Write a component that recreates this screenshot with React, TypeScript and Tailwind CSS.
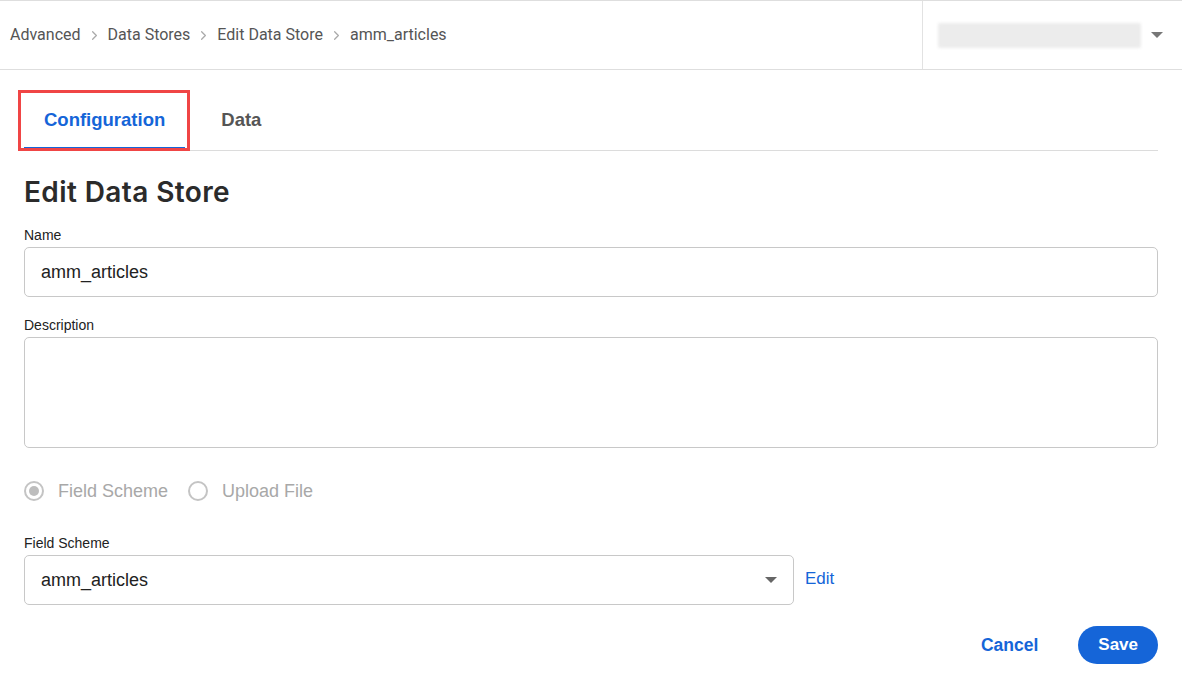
import { ChevronRight } from 'lucide-react';

const crumbs = ['Advanced', 'Data Stores', 'Edit Data Store', 'amm_articles'];

function Caret({ className }: { className?: string }) {
  return (
    <svg width="12" height="6" viewBox="0 0 12 6" className={className}>
      <path d="M0 0 L12 0 L6 6 Z" fill="currentColor" />
    </svg>
  );
}

function Radio({ checked, label }: { checked?: boolean; label: string }) {
  return (
    <label className="flex items-center gap-[14px] text-[18px] text-[#a8a8a8]">
      <span className="flex h-[20px] w-[20px] items-center justify-center rounded-full border-2 border-[#c4c4c4]">
        {checked && <span className="h-[10px] w-[10px] rounded-full bg-[#bdbdbd]" />}
      </span>
      {label}
    </label>
  );
}

export default function App() {
  return (
    <div className="h-[684px] w-full bg-white font-['Liberation_Sans',Arial,sans-serif] text-[#222]">
      <header className="flex h-[70px] border-y border-[#dedede]">
        <nav className="flex flex-1 items-center pl-[10px] font-['Roboto',sans-serif] text-[16px] text-[#555]">
          {crumbs.map((c, i) => (
            <span key={c} className="flex items-center">
              {i > 0 && <ChevronRight size={15} strokeWidth={2} className="mx-[6px] text-[#aaa]" />}
              {c}
            </span>
          ))}
        </nav>
        <div className="flex w-[260px] items-center border-l border-[#e2e2e2] pl-[15px]">
          <div className="h-[25px] w-[203px] rounded-[2px] bg-[#ececec] blur-[1.5px]" />
          <Caret className="ml-[10px] text-[#777]" />
        </div>
      </header>

      <main className="px-6 pt-[20px]">
        <div className="flex gap-4 border-b border-[#dcdcdc]">
          <div className="relative flex h-[60px] items-center border-b-[3px] border-[#1565d8] px-5 pt-[3px] text-[18.5px] font-bold text-[#1565d8]">
            Configuration
            <span className="pointer-events-none absolute top-0 -bottom-[4px] -left-[6px] -right-[5px] border-[3px] border-[#f04545]" />
          </div>
          <div className="flex h-[60px] items-center px-5 text-[18.5px] font-bold text-[#555]">Data</div>
        </div>

        <h1 className="mt-[23px] font-['Inter',sans-serif] text-[28px] font-semibold leading-[36px] tracking-[0.4px] text-[#2b2b2b]">
          Edit Data Store
        </h1>

        <div className="mt-[15px] text-[14px] leading-[20px]">Name</div>
        <div className="mt-[2px] flex h-[50px] items-center rounded-[5px] border border-[#c8c8c8] px-4 text-[18px]">
          amm_articles
        </div>

        <div className="mt-[18px] text-[14px] leading-[20px]">Description</div>
        <div className="mt-[2px] h-[111px] rounded-[5px] border border-[#c8c8c8]" />

        <div className="mt-[31px] flex h-[24px] items-center gap-[20px]">
          <Radio checked label="Field Scheme" />
          <Radio label="Upload File" />
        </div>

        <div className="mt-[30px] text-[14px] leading-[20px]">Field Scheme</div>
        <div className="mt-[2px] flex items-center gap-[11px]">
          <div className="flex h-[50px] w-[770px] items-center justify-between rounded-[5px] border border-[#c8c8c8] pl-4 pr-[16px] text-[18px]">
            amm_articles
            <Caret className="text-[#666]" />
          </div>
          <a className="mb-[3px] text-[17px] text-[#1565d8]">Edit</a>
        </div>

        <div className="mt-[21px] flex items-center justify-end gap-10">
          <button className="text-[17.5px] font-bold text-[#1565d8]">Cancel</button>
          <button className="h-[38px] rounded-full bg-[#1565d8] px-5 text-[17px] font-bold text-white">Save</button>
        </div>
      </main>
    </div>
  );
}
